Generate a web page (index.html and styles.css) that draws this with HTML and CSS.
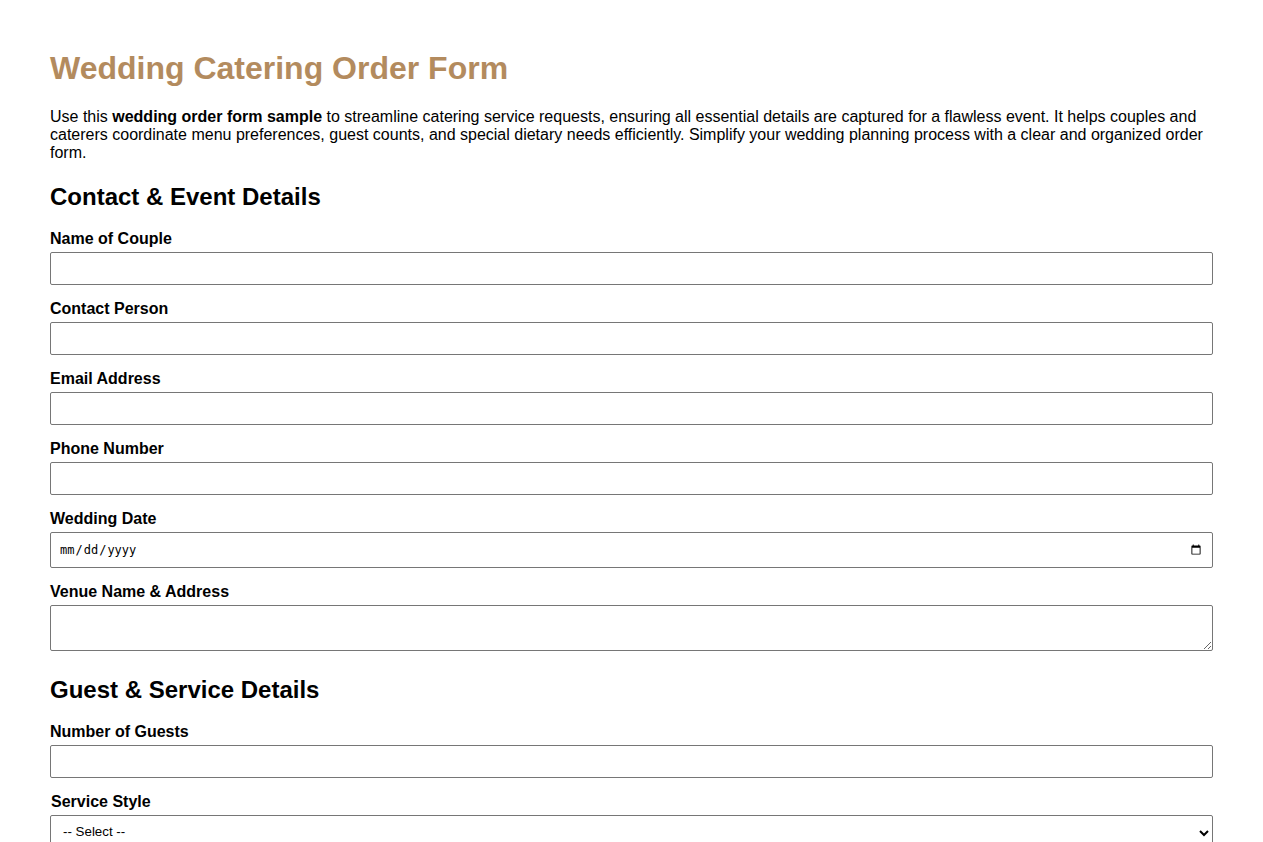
FILE: index.html
```html
<!DOCTYPE html>
<html lang="en">
<head>
<meta charset="utf-8">
<title>Wedding Catering Order Form</title>
<link rel="stylesheet" href="styles.css">
</head>
<body>
<div class="page">
  <h1 class="title">Wedding Catering Order Form</h1>
  <p class="intro">Use this <strong>wedding order form sample</strong> to streamline catering service requests, ensuring all essential details are captured for a flawless event. It helps couples and caterers coordinate menu preferences, guest counts, and special dietary needs efficiently. Simplify your wedding planning process with a clear and organized order form.</p>

  <form class="form">
    <h2 class="section-title">Contact &amp; Event Details</h2>

    <label class="field-label" for="couple">Name of Couple</label>
    <input class="field" type="text" id="couple">

    <label class="field-label" for="contact">Contact Person</label>
    <input class="field" type="text" id="contact">

    <label class="field-label" for="email">Email Address</label>
    <input class="field" type="email" id="email">

    <label class="field-label" for="phone">Phone Number</label>
    <input class="field" type="tel" id="phone">

    <label class="field-label" for="date">Wedding Date</label>
    <input class="field field-date" type="date" id="date">

    <label class="field-label" for="venue">Venue Name &amp; Address</label>
    <textarea class="field field-area" id="venue"></textarea>

    <h2 class="section-title section-gap">Guest &amp; Service Details</h2>

    <label class="field-label" for="guests">Number of Guests</label>
    <input class="field" type="number" id="guests">

    <label class="field-label shifted" for="style">Service Style</label>
    <select class="field field-select" id="style">
      <option>-- Select --</option>
      <option>Plated Dinner</option>
      <option>Buffet</option>
      <option>Family Style</option>
      <option>Cocktail Reception</option>
    </select>

    <label class="field-label" for="notes">Special Dietary Needs</label>
    <textarea class="field field-area" id="notes"></textarea>
  </form>
</div>
</body>
</html>
```

FILE: styles.css
```css
html, body {
  margin: 0;
  padding: 0;
  background: #ffffff;
}

body {
  font-family: "Liberation Sans", Arial, sans-serif;
  font-size: 16px;
  color: #000000;
}

.page {
  padding: 27px 50px 40px;
}

.title {
  font-size: 32px;
  font-weight: bold;
  color: #b38b5e;
  margin: 23px 0 21px;
  line-height: 37px;
}

.intro {
  margin: 0 0 21px;
  line-height: 18px;
}

.form {
  display: flex;
  flex-direction: column;
}

.section-title {
  font-size: 24px;
  font-weight: bold;
  line-height: 28px;
  margin: 0 0 19px;
}

.section-gap {
  margin-top: 10px;
}

.field-label {
  display: block;
  font-weight: bold;
  font-size: 16px;
  line-height: 18px;
  margin: 0 0 4px;
}

.shifted {
  padding-left: 1px;
}

.field {
  box-sizing: border-box;
  width: 100%;
  height: 33px;
  margin: 0 0 15px;
  padding: 8px;
  border: 1px solid #767676;
  border-radius: 2px;
  font-family: "Liberation Sans", Arial, sans-serif;
  font-size: 13.33px;
  background: #ffffff;
  color: #000000;
}

.field-date {
  height: 36px;
  font-family: "DejaVu Sans Mono", monospace;
  font-size: 12px;
}

.field-area {
  height: 46px;
  resize: vertical;
}

.field-select {
  height: 36px;
  padding: 4px 8px 8px 8px;
}
```
